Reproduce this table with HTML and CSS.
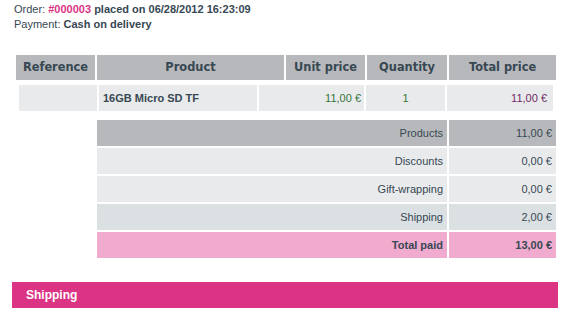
FILE: index.html
```html
<!DOCTYPE html>
<html>
<head>
<meta charset="utf-8">
<link rel="stylesheet" href="styles.css">
</head>
<body>
<div class="page">
  <div class="info">
    <div class="line">Order: <a class="num">#000003</a> <b>placed on 06/28/2012 16:23:09</b></div>
    <div class="line">Payment: <b>Cash on delivery</b></div>
  </div>

  <div class="thead">
    <div class="th">Reference</div>
    <div class="th">Product</div>
    <div class="th">Unit price</div>
    <div class="th">Quantity</div>
    <div class="th">Total price</div>
  </div>

  <div class="trow">
    <div class="td"></div>
    <div class="td prod">16GB Micro SD TF</div>
    <div class="td right green">11,00 €</div>
    <div class="td center green">1</div>
    <div class="td right purple total">11,00 €</div>
  </div>

  <div class="summary">
    <div class="sl grey">Products</div><div class="sv grey">11,00 €</div>
    <div class="sl light">Discounts</div><div class="sv light">0,00 €</div>
    <div class="sl light">Gift-wrapping</div><div class="sv light">0,00 €</div>
    <div class="sl blue">Shipping</div><div class="sv blue">2,00 €</div>
    <div class="sl pink bold">Total paid</div><div class="sv pink bold">13,00 €</div>
  </div>

  <div class="bar">Shipping</div>
</div>
</body>
</html>
```

FILE: styles.css
```css
html, body {
  margin: 0;
  padding: 0;
  background: #ffffff;
}
.page {
  width: 582px;
  font-family: "Liberation Sans", Arial, sans-serif;
  font-size: 11px;
  color: #374853;
}
.info {
  padding: 2px 0 0 14px;
}
.line {
  line-height: 15px;
  height: 15px;
}
.num {
  color: #db3484;
  font-weight: bold;
  text-decoration: none;
}
.thead {
  display: grid;
  grid-template-columns: 79px 187px 79px 80px 107px;
  column-gap: 2px;
  margin: 23px 0 0 16px;
}
.th {
  background: #b7b8bb;
  height: 25px;
  line-height: 25px;
  text-align: center;
  font-family: "DejaVu Sans", Verdana, sans-serif;
  font-weight: bold;
  font-size: 11.4px;
  color: #374853;
}
.trow {
  display: grid;
  grid-template-columns: 78px 158px 105px 79px 106px;
  column-gap: 2px;
  margin: 5px 0 0 19px;
}
.td {
  background: #e9eaec;
  height: 26px;
  line-height: 26px;
  padding: 0 3px;
}
.prod {
  font-weight: bold;
  padding-left: 4px;
}
.right { text-align: right; }
.center { text-align: center; }
.total { padding-right: 6px; }
.green { color: #33763a; }
.purple { color: #6f2a66; }
.summary {
  display: grid;
  grid-template-columns: 350px 107px;
  column-gap: 2px;
  row-gap: 2px;
  margin: 9px 0 0 97px;
}
.sl, .sv {
  height: 26px;
  line-height: 26px;
  text-align: right;
  padding-right: 4px;
}
.grey { background: #b7b8bb; }
.light { background: #e9eaec; }
.blue { background: #dbe0e3; }
.pink { background: #f1abcf; }
.bold { font-weight: bold; }
.bar {
  margin: 24px 0 0 12px;
  width: 546px;
  height: 26px;
  line-height: 26px;
  background: #db3484;
  color: #ffffff;
  font-family: "Liberation Sans", Arial, sans-serif;
  font-weight: bold;
  font-size: 12px;
  padding-left: 14px;
  box-sizing: border-box;
}
```
